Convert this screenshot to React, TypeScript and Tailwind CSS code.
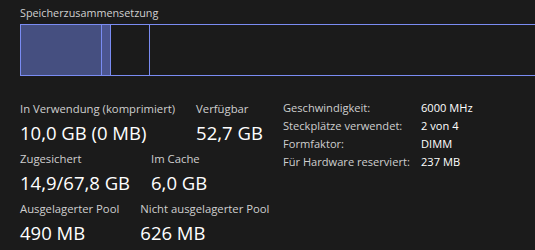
const font = { fontFamily: '"Open Sans", "Liberation Sans", sans-serif' }

const leftRows = [
  [
    { label: 'In Verwendung (komprimiert)', value: '10,0 GB (0 MB)' },
    { label: 'Verfügbar', value: '52,7 GB' },
  ],
  [
    { label: 'Zugesichert', value: '14,9/67,8 GB' },
    { label: 'Im Cache', value: '6,0 GB' },
  ],
  [
    { label: 'Ausgelagerter Pool', value: '490 MB' },
    { label: 'Nicht ausgelagerter Pool', value: '626 MB' },
  ],
]

const details = [
  ['Geschwindigkeit:', '6000 MHz'],
  ['Steckplätze verwendet:', '2 von 4'],
  ['Formfaktor:', 'DIMM'],
  ['Für Hardware reserviert:', '237 MB'],
]

export default function App() {
  return (
    <div className="w-[535px] h-[250px] overflow-hidden bg-[#1b1b1b] text-white" style={font}>
      <div className="pl-[20px] pt-[5px] text-[10.8px] leading-[16px] text-[#d0d0d0]">
        Speicherzusammensetzung
      </div>

      {/* Memory composition bar */}
      <div className="ml-[20px] mt-[3px] w-[530px] h-[52px] border border-[#7a8cf2] flex">
        <div className="w-[81px] bg-[#454f80] border-r border-[#7a8cf2]" />
        <div className="w-[9px] bg-[#4b5590] border-r border-[#7a8cf2]" />
        <div className="w-[39px] border-r border-[#7a8cf2]" />
        <div className="flex-1" />
      </div>

      <div className="flex mt-[23px]">
        <div className="pl-[20px] w-[283px] shrink-0 pt-[2px] flex flex-col gap-[2px]">
          {leftRows.map((row, i) => (
            <div key={i} className="flex gap-[21px]">
              {row.map((c) => (
                <div key={c.label} className="flex flex-col">
                  <span className="text-[11.3px] leading-[16px] text-[#cfcfcf] whitespace-nowrap">{c.label}</span>
                  <span className="text-[18.5px] leading-[32px] whitespace-nowrap">{c.value}</span>
                </div>
              ))}
            </div>
          ))}
        </div>

        <div className="flex flex-col">
          {details.map(([k, v]) => (
            <div key={k} className="flex text-[11.1px] leading-[18px]">
              <span className="w-[138px] text-[#cfcfcf] whitespace-nowrap">{k}</span>
              <span className="whitespace-nowrap">{v}</span>
            </div>
          ))}
        </div>
      </div>
    </div>
  )
}
